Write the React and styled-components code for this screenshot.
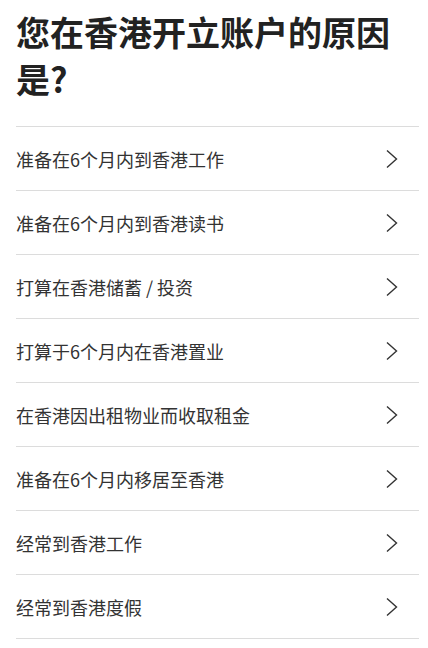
import React from 'react';
import styled, { createGlobalStyle } from 'styled-components';

const GlobalStyle = createGlobalStyle`
  html, body {
    margin: 0;
    padding: 0;
    background: #fff;
  }
  body {
    font-family: 'Noto Sans CJK SC', 'Noto Sans', sans-serif;
  }
`;

const Page = styled.div`
  padding: 8px 9px 0 16px;
`;

const Title = styled.h1`
  margin: 0 0 24px;
  font-size: 34px;
  line-height: 47px;
  font-weight: 700;
  color: #222;
  letter-spacing: 0;
`;

const List = styled.ul`
  list-style: none;
  margin: 0;
  padding: 0;
  border-top: 1px solid #dcdcdc;
`;

const Row = styled.li`
  display: flex;
  align-items: center;
  justify-content: space-between;
  height: 63px;
  border-bottom: 1px solid #dcdcdc;
  font-size: 18px;
  color: #333;
`;

const Label = styled.span`
  line-height: 1;
`;

const Chevron = styled.svg`
  width: 14px;
  height: 20px;
  margin-right: 20px;
  flex-shrink: 0;
`;

const reasons = [
  '准备在6个月内到香港工作',
  '准备在6个月内到香港读书',
  '打算在香港储蓄 / 投资',
  '打算于6个月内在香港置业',
  '在香港因出租物业而收取租金',
  '准备在6个月内移居至香港',
  '经常到香港工作',
  '经常到香港度假',
];

const App = () => (
  <>
    <GlobalStyle />
    <Page>
      <Title>您在香港开立账户的原因是?</Title>
      <List>
        {reasons.map((r) => (
          <Row key={r}>
            <Label>{r}</Label>
            <Chevron viewBox="0 0 14 20" fill="none">
              <path d="M2 1.5 L11.5 10 L2 18.5" stroke="#333" strokeWidth="1.4" />
            </Chevron>
          </Row>
        ))}
      </List>
    </Page>
  </>
);

export default App;
